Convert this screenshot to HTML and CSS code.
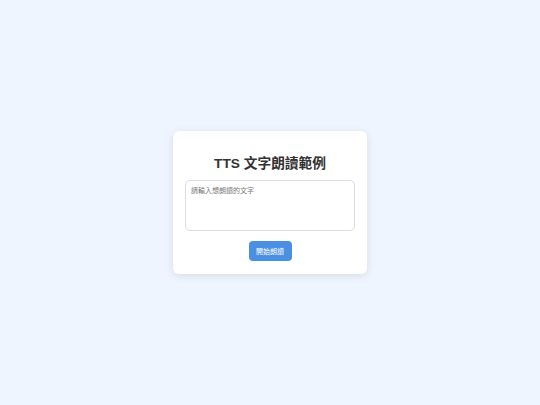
FILE: index.html
```html
<!DOCTYPE html>
<html lang="zh-Hant">
<head>
<meta charset="utf-8">
<link rel="stylesheet" href="styles.css">
</head>
<body>
<main class="card">
  <h1 class="title">TTS 文字朗讀範例</h1>
  <textarea class="input" placeholder="請輸入想朗讀的文字"></textarea>
  <button class="btn" type="button">開始朗讀</button>
</main>
</body>
</html>
```
FILE: styles.css
```css
html, body {
  margin: 0;
  padding: 0;
}
body {
  min-height: 100vh;
  background: #eef5ff;
  font-family: "Liberation Sans", "Noto Sans CJK TC", sans-serif;
  display: flex;
  align-items: center;
  justify-content: center;
}
.card {
  width: 170px;
  background: #fff;
  border-radius: 6px;
  box-shadow: 0 2px 8px rgba(0, 0, 0, 0.1);
  padding: 12px 12px 13px;
  display: flex;
  flex-direction: column;
  align-items: center;
}
.title {
  margin: 11px 0 7px;
  font-size: 13.7px;
  line-height: 19px;
  font-weight: bold;
  color: #333;
}
.input {
  box-sizing: border-box;
  width: 170px;
  height: 51px;
  border: 1px solid #ddd;
  border-radius: 5px;
  padding: 4px 5px;
  font-family: "Liberation Sans", "Noto Sans CJK TC", sans-serif;
  font-size: 7px;
  resize: none;
  margin: 0;
}
.input::placeholder {
  color: #777;
}
.btn {
  margin-top: 10px;
  height: 20px;
  width: 43px;
  padding: 0;
  border: none;
  border-radius: 4px;
  background: #4a90e2;
  color: #fff;
  font-family: "Liberation Sans", "Noto Sans CJK TC", sans-serif;
  font-size: 7px;
}
```
